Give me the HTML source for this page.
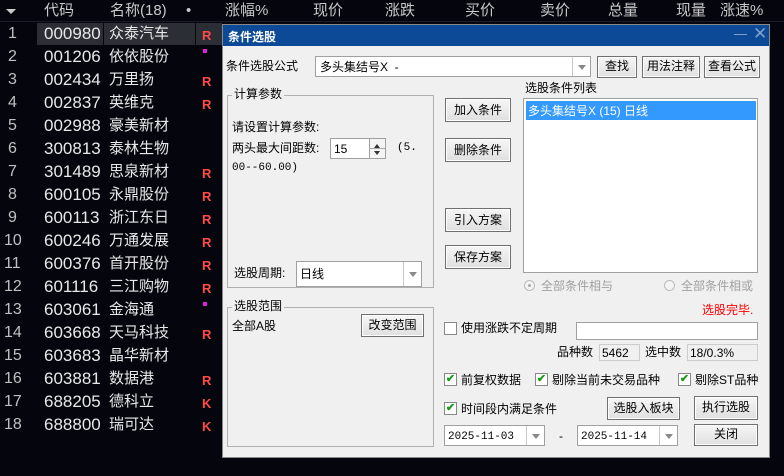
<!DOCTYPE html>
<html><head><meta charset="utf-8"><style>
*{margin:0;padding:0;box-sizing:border-box}
body{width:784px;height:476px;background:#05050e;overflow:hidden;position:relative;font-family:"Liberation Sans","Noto Sans CJK SC",sans-serif}
.a{position:absolute;white-space:nowrap}
.hd{color:#c8c8c8;font-size:15px;top:0;line-height:22px}
.tb{color:#e8e8e8;font-size:17px;line-height:22px;font-family:"Liberation Sans",sans-serif}
.nm{color:#e8e8e8;font-size:15px;line-height:22px;font-family:"Noto Sans CJK SC",sans-serif}
.num{color:#c0c0c0;font-size:16px;line-height:22px;font-family:"Liberation Sans",sans-serif}
.r{color:#ff4a4a;font-size:13px;font-weight:bold}
.dlg{position:absolute;left:222px;top:24px;width:548px;height:434px;background:#f0f0f0;border:1px solid #888}
.d{position:absolute;white-space:nowrap;font-size:12px;color:#000;line-height:14px}
.btn{position:absolute;background:linear-gradient(#f6f6f6,#e0e0e0);border:1px solid #707070;box-shadow:inset 0 0 0 1px #fff;font-size:12px;text-align:center}
.inp{position:absolute;background:#fff;border:1px solid #a0a0a0;font-size:12px}
.grp{position:absolute;border:1px solid #b0b0b0}
.dd{position:absolute;right:0;top:0;bottom:0;width:18px;border-left:1px solid #c8c8c8}
.dd:after{content:"";position:absolute;left:5px;top:50%;margin-top:-2px;border:4px solid transparent;border-top:5px solid #888}
.cb{position:absolute;width:13px;height:13px;border:1px solid #888;background:#fff;font-size:11px;color:#1a9a1a;line-height:11px;text-align:center;font-weight:bold}
</style></head><body>
<div class="a" style="left:0;top:0;width:784px;height:22px;background:#05050e;border-bottom:1px solid #1c1c28"></div>
<div class="a" style="left:6px;top:9px;border:5px solid transparent;border-top:5px solid #ccc"></div>
<div class="a hd" style="left:44px">代码</div>
<div class="a hd" style="left:110px">名称(18)</div>
<div class="a hd" style="left:186px">•</div>
<div class="a hd" style="left:225px">涨幅%</div>
<div class="a hd" style="left:313px">现价</div>
<div class="a hd" style="left:385px">涨跌</div>
<div class="a hd" style="left:465px">买价</div>
<div class="a hd" style="left:540px">卖价</div>
<div class="a hd" style="left:608px">总量</div>
<div class="a hd" style="left:676px">现量</div>
<div class="a hd" style="left:720px">涨速%</div>
<div class="a" style="left:37px;top:23px;width:66px;height:22px;background:#2b2e35"></div>
<div class="a" style="left:104px;top:23px;width:91px;height:22px;background:#2b2e35"></div>
<div class="a" style="left:196px;top:23px;width:26px;height:22px;background:#2b2e35"></div>
<div id="rows"></div>
<script>
var d=[["000980","众泰汽车","R"],["001206","依依股份","p"],["002434","万里扬","R"],["002837","英维克","R"],["002988","豪美新材",""],["300813","泰林生物",""],["301489","思泉新材","R"],["600105","永鼎股份","R"],["600113","浙江东日","R"],["600246","万通发展","R"],["600376","首开股份","R"],["601116","三江购物","R"],["603061","金海通","p"],["603668","天马科技","R"],["603683","晶华新材",""],["603881","数据港","R"],["688205","德科立","K"],["688800","瑞可达","K"]];
var h="";
for(var i=0;i<18;i++){var t=23+i*23;
h+='<div class="a num" style="left:'+(i<9?8:4)+'px;top:'+t+'px">'+(i+1)+'</div>';
h+='<div class="a tb" style="left:44px;top:'+t+'px">'+d[i][0]+'</div>';
h+='<div class="a nm" style="left:109px;top:'+(t-1)+'px">'+d[i][1]+'</div>';
if(d[i][2]=="p")h+='<div class="a" style="left:203px;top:'+(t+3)+'px;width:4px;height:4px;background:#e020e0"></div>';
else if(d[i][2])h+='<div class="a r" style="left:202px;top:'+(t+5)+'px">'+d[i][2]+'</div>';
}
document.getElementById("rows").innerHTML=h;
</script>
<div class="dlg">
<div class="a" style="left:0;top:0;width:546px;height:21px;background:#0c4a98"></div>
<div class="a" style="left:5px;top:3px;color:#fff;font-size:12px;font-weight:bold">条件选股</div>
<div class="a" style="left:511px;top:9px;width:13px;height:1px;background:#7fa0cc"></div>
<div class="a" style="left:530px;top:-1px;color:#7fa0cc;font-size:17px">✕</div>
</div>
<div class="d" style="left:226px;top:59px">条件选股公式</div>
<div class="inp" style="left:315px;top:56px;width:276px;height:21px"><span class="d" style="left:4px;top:3px">多头集结号X&nbsp;&nbsp;-</span><div class="dd"></div></div>
<div class="btn" style="left:597px;top:56px;width:40px;height:22px;line-height:19px">查找</div>
<div class="btn" style="left:642px;top:56px;width:58px;height:22px;line-height:19px">用法注释</div>
<div class="btn" style="left:704px;top:56px;width:56px;height:22px;line-height:19px">查看公式</div>
<div class="grp" style="left:227px;top:95px;width:207px;height:193px"></div>
<div class="d" style="left:232px;top:87px;background:#f0f0f0;padding:0 2px">计算参数</div>
<div class="d" style="left:232px;top:120px">请设置计算参数:</div>
<div class="d" style="left:232px;top:141px">两头最大间距数:</div>
<div class="inp" style="left:330px;top:138px;width:40px;height:21px"><span class="d" style="left:3px;top:3px">15</span></div>
<div class="a" style="left:369px;top:138px;width:17px;height:21px;background:#f4f4f4;border:1px solid #a0a0a0"></div>
<div class="a" style="left:374px;top:141px;border:3px solid transparent;border-bottom:4px solid #333"></div>
<div class="a" style="left:374px;top:151px;border:3px solid transparent;border-top:4px solid #333"></div>
<div class="a" style="left:370px;top:148px;width:15px;height:1px;background:#aaa"></div>
<div class="d" style="left:397px;top:141px;font-family:'Liberation Mono',monospace;font-size:11px">(5.</div>
<div class="d" style="left:232px;top:161px;font-family:'Liberation Mono',monospace;font-size:11px">00--60.00)</div>
<div class="d" style="left:234px;top:266px">选股周期:</div>
<div class="inp" style="left:296px;top:261px;width:126px;height:26px"><span class="d" style="left:3px;top:5px">日线</span><div class="dd"></div></div>
<div class="btn" style="left:445px;top:98px;width:66px;height:24px;line-height:22px">加入条件</div>
<div class="btn" style="left:445px;top:138px;width:66px;height:24px;line-height:22px">删除条件</div>
<div class="btn" style="left:445px;top:208px;width:66px;height:24px;line-height:22px">引入方案</div>
<div class="btn" style="left:445px;top:245px;width:66px;height:24px;line-height:22px">保存方案</div>
<div class="d" style="left:525px;top:81px">选股条件列表</div>
<div class="inp" style="left:523px;top:98px;width:235px;height:175px"></div>
<div class="a" style="left:526px;top:101px;width:230px;height:19px;background:#3399ff"></div>
<div class="d" style="left:528px;top:104px;color:#fff">多头集结号X (15) 日线</div>
<div class="a" style="left:524px;top:280px;width:11px;height:11px;border-radius:50%;border:1px solid #bbb;background:#f4f4f4"></div>
<div class="a" style="left:528px;top:284px;width:3px;height:3px;border-radius:50%;background:#aaa"></div>
<div class="d" style="left:541px;top:279px;color:#a0a0a0">全部条件相与</div>
<div class="a" style="left:664px;top:280px;width:11px;height:11px;border-radius:50%;border:1px solid #bbb;background:#f4f4f4"></div>
<div class="d" style="left:681px;top:279px;color:#a0a0a0">全部条件相或</div>
<div class="grp" style="left:227px;top:307px;width:207px;height:140px"></div>
<div class="d" style="left:232px;top:299px;background:#f0f0f0;padding:0 2px">选股范围</div>
<div class="d" style="left:232px;top:319px">全部A股</div>
<div class="btn" style="left:361px;top:314px;width:63px;height:23px;line-height:20px">改变范围</div>
<div class="d" style="left:702px;top:303px;color:#ff0000">选股完毕.</div>
<div class="cb" style="left:444px;top:322px"></div>
<div class="d" style="left:461px;top:321px">使用涨跌不定周期</div>
<div class="inp" style="left:576px;top:322px;width:182px;height:18px"></div>
<div class="d" style="left:557px;top:345px">品种数</div>
<div class="inp" style="left:599px;top:344px;width:41px;height:17px;background:#f0f0f0;border-color:#ccc"><span class="d" style="left:2px;top:1px">5462</span></div>
<div class="d" style="left:645px;top:345px">选中数</div>
<div class="inp" style="left:687px;top:344px;width:71px;height:17px;background:#f0f0f0;border-color:#ccc"><span class="d" style="left:2px;top:1px">18/0.3%</span></div>
<div class="cb" style="left:444px;top:373px">✔</div>
<div class="d" style="left:461px;top:373px">前复权数据</div>
<div class="cb" style="left:535px;top:373px">✔</div>
<div class="d" style="left:552px;top:373px">剔除当前未交易品种</div>
<div class="cb" style="left:678px;top:373px">✔</div>
<div class="d" style="left:695px;top:373px">剔除ST品种</div>
<div class="cb" style="left:444px;top:402px">✔</div>
<div class="d" style="left:461px;top:402px">时间段内满足条件</div>
<div class="btn" style="left:607px;top:397px;width:73px;height:23px;line-height:20px">选股入板块</div>
<div class="btn" style="left:694px;top:396px;width:64px;height:24px;line-height:21px">执行选股</div>
<div class="inp" style="left:444px;top:425px;width:101px;height:21px"><span class="d" style="left:3px;top:4px;font-family:'Liberation Mono',monospace;font-size:11px">2025-11-03</span><div class="dd"></div></div>
<div class="d" style="left:559px;top:429px">-</div>
<div class="inp" style="left:577px;top:425px;width:101px;height:21px"><span class="d" style="left:3px;top:4px;font-family:'Liberation Mono',monospace;font-size:11px">2025-11-14</span><div class="dd"></div></div>
<div class="btn" style="left:694px;top:424px;width:64px;height:22px;line-height:19px">关闭</div>
</body></html>
